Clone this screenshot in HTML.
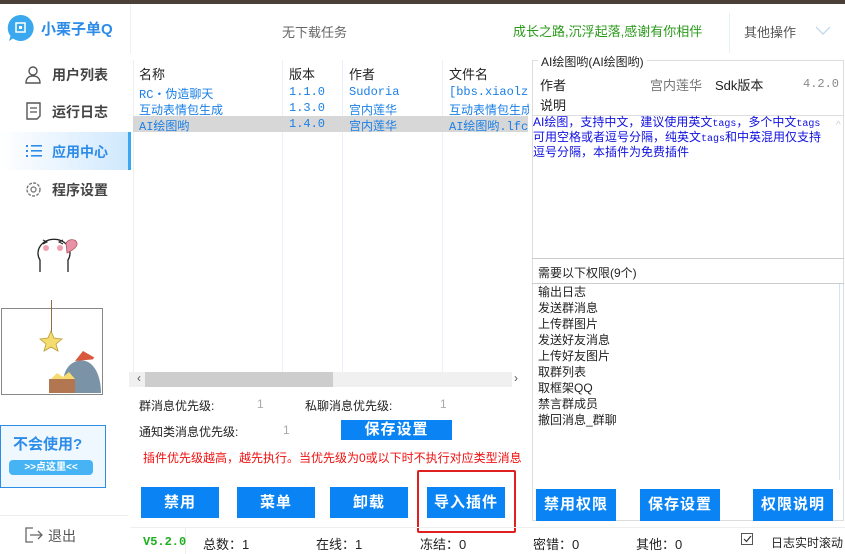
<!DOCTYPE html>
<html><head><meta charset="utf-8"><style>
*{margin:0;padding:0;box-sizing:border-box}
body{width:845px;height:554px;overflow:hidden;background:#fff;font-family:"Liberation Sans","Noto Sans CJK SC",sans-serif;font-size:13px;color:#222;position:relative}
.a{position:absolute;white-space:nowrap}
.m{font-family:"Liberation Mono","Noto Sans CJK SC",monospace;font-size:12px}
.l{font-family:"Liberation Mono",monospace;font-size:10px}
.btn{position:absolute;background:#0a84f5;color:#fff;font-weight:bold;font-size:15px;text-align:center;letter-spacing:1px}
.nav{position:absolute;left:22px;font-size:14px;color:#444;font-weight:bold}
</style></head><body>
<div class="a" style="left:0;top:0;width:845px;height:4px;background:#4a4038"></div>
<div class="a" style="left:130px;top:4px;width:1px;height:50px;background:#f0f0f0"></div>
<svg class="a" style="left:6px;top:13px" width="30" height="30" viewBox="0 0 30 30"><path d="M15 2a13 13 0 1 1-8 23.5L3 28l1.5-5A13 13 0 0 1 15 2z" fill="#3aa8ee"/><rect x="10" y="10" width="9" height="9" fill="none" stroke="#fff" stroke-width="1.5"/><rect x="13" y="13" width="3" height="3" fill="#fff"/></svg>
<div class="a" style="left:41px;top:18px;font-size:15px;font-weight:bold;color:#2d8ce8">小栗子单Q</div>
<div class="a" style="left:282px;top:22px;color:#666">无下载任务</div>
<div class="a" style="left:513px;top:21px;color:#2a9a1a;font-size:13px">成长之路,沉浮起落,感谢有你相伴</div>
<div class="a" style="left:729px;top:13px;width:1px;height:40px;background:#e6eef6"></div>
<div class="a" style="left:744px;top:22px;color:#555">其他操作</div>
<svg class="a" style="left:815px;top:26px" width="16" height="9"><path d="M1 1l7 7 7-7" fill="none" stroke="#b8d4ee" stroke-width="1.2"/></svg>
<svg class="a" style="left:25px;top:66px" width="16" height="18"><circle cx="8" cy="5" r="4" fill="none" stroke="#555" stroke-width="1.4"/><path d="M1 17c0-5 3-7 7-7s7 2 7 7z" fill="none" stroke="#555" stroke-width="1.4"/></svg>
<div class="nav" style="left:52px;top:65px">用户列表</div>
<svg class="a" style="left:26px;top:102px" width="15" height="18"><path d="M1 1h13v13l-3 3H1z" fill="none" stroke="#555" stroke-width="1.4"/><path d="M4 6h7M4 10h7" stroke="#555" stroke-width="1.2"/></svg>
<div class="nav" style="left:52px;top:102px">运行日志</div>
<div class="a" style="left:0;top:132px;width:131px;height:38px;background:linear-gradient(90deg,#fff,#cfe8fd)"></div>
<div class="a" style="left:128px;top:132px;width:3px;height:38px;background:#3aa8ee"></div>
<svg class="a" style="left:26px;top:145px" width="16" height="13"><g fill="#2d8ce8"><rect x="0" y="0" width="2" height="2"/><rect x="0" y="5" width="2" height="2"/><rect x="0" y="10" width="2" height="2"/><rect x="5" y="0" width="11" height="1.6"/><rect x="5" y="5" width="11" height="1.6"/><rect x="5" y="10" width="11" height="1.6"/></g></svg>
<div class="nav" style="left:52px;top:142px;color:#2d8ce8">应用中心</div>
<svg class="a" style="left:25px;top:181px" width="17" height="17"><circle cx="8.5" cy="8.5" r="6.5" fill="none" stroke="#777" stroke-width="1.4" stroke-dasharray="3 1.3"/><circle cx="8.5" cy="8.5" r="2.5" fill="none" stroke="#777" stroke-width="1.3"/></svg>
<div class="nav" style="left:52px;top:180px">程序设置</div>
<svg class="a" style="left:30px;top:222px" width="62" height="58"><path d="M10 50V38a16 14 0 1 1 28 0v12" fill="#fff" stroke="#222" stroke-width="1.3"/><circle cx="16" cy="26" r="3" fill="#f0a0b0"/><circle cx="30" cy="26" r="3" fill="#f0a0b0"/><path d="M13 18l4 2-4 2M33 18l-4 2 4 2" fill="none" stroke="#222"/><path d="M36 21c3-5 10-4 11 0 1 5-8 9-10 10z" fill="#e891a8" stroke="#a55" stroke-width=".8"/></svg>
<div class="a" style="left:1px;top:308px;width:102px;height:87px;border:1.5px solid #888"></div>
<div class="a" style="left:51px;top:300px;width:1px;height:33px;background:#8a7040"></div>
<svg class="a" style="left:38px;top:330px" width="26" height="22"><path d="M13 1l3 7 8 1-6 5 2 7-7-4-7 4 2-7-6-5 8-1z" fill="#f4dc70" stroke="#b99a30" stroke-width=".8"/></svg>
<svg class="a" style="left:45px;top:345px" width="58" height="50"><path d="M20 48c-4-10-2-28 12-32 16-4 24 14 24 32z" fill="#7b93a6"/><path d="M30 16l8-10 14 8z" fill="#d9583c"/><circle cx="51" cy="15" r="3" fill="#fff"/><rect x="4" y="34" width="26" height="14" fill="#b27650"/><path d="M6 34l6-6 6 4 6-5 6 7z" fill="#f4dc70"/></svg>
<div class="a" style="left:0;top:425px;width:106px;height:63px;border:1.5px solid #2d8ce8;background:#f0f8ff"></div>
<div class="a" style="left:13px;top:433px;font-size:15px;font-weight:bold;color:#2d8ce8">不会使用?</div>
<div class="a" style="left:9px;top:460px;width:84px;height:15px;background:#46b4f4;border-radius:4px;color:#fff;font-size:10px;font-weight:bold;text-align:center;line-height:15px">&gt;&gt;点这里&lt;&lt;</div>
<div class="a" style="left:0;top:515px;width:128px;height:1px;background:#eee"></div>
<svg class="a" style="left:25px;top:527px" width="18" height="16"><path d="M8 1H1v14h7" fill="none" stroke="#666" stroke-width="1.3"/><path d="M5 8h12M13 4l4 4-4 4" fill="none" stroke="#666" stroke-width="1.3"/></svg>
<div class="a" style="left:48px;top:526px;color:#555;font-size:14px">退出</div>
<div class="a" style="left:133px;top:60px;width:395px;height:312px;border-left:1px solid #eee"></div>
<div class="a" style="left:282px;top:60px;width:1px;height:312px;background:#e8f0f8"></div>
<div class="a" style="left:342px;top:60px;width:1px;height:312px;background:#e8f0f8"></div>
<div class="a" style="left:442px;top:60px;width:1px;height:312px;background:#e8f0f8"></div>
<div class="a" style="left:139px;top:64px">名称</div>
<div class="a" style="left:289px;top:64px">版本</div>
<div class="a" style="left:349px;top:64px">作者</div>
<div class="a" style="left:449px;top:64px">文件名</div>
<div class="a" style="left:133px;top:116px;width:395px;height:16px;background:#d7d7d7"></div>
<div class="a m" style="left:139px;top:85px;color:#1a7fe6">RC・伪造聊天</div>
<div class="a m" style="left:289px;top:85px;color:#1a7fe6">1.1.0</div>
<div class="a m" style="left:349px;top:85px;color:#1a7fe6">Sudoria</div>
<div class="a m" style="left:449px;top:85px;color:#1a7fe6;width:80px;overflow:hidden">[bbs.xiaolz.cn</div>
<div class="a m" style="left:139px;top:101px;color:#1a7fe6">互动表情包生成</div>
<div class="a m" style="left:289px;top:101px;color:#1a7fe6">1.3.0</div>
<div class="a m" style="left:349px;top:101px;color:#1a7fe6">宫内莲华</div>
<div class="a m" style="left:449px;top:101px;color:#1a7fe6;width:80px;overflow:hidden">互动表情包生成</div>
<div class="a m" style="left:139px;top:117px;color:#1a7fe6">AI绘图哟</div>
<div class="a m" style="left:289px;top:117px;color:#1a7fe6">1.4.0</div>
<div class="a m" style="left:349px;top:117px;color:#1a7fe6">宫内莲华</div>
<div class="a m" style="left:449px;top:117px;color:#1a7fe6;width:80px;overflow:hidden">AI绘图哟.lfcd</div>
<div class="a" style="left:129px;top:372px;width:383px;height:15px;background:#f0f0f0"></div>
<div class="a" style="left:145px;top:372px;width:188px;height:15px;background:#cdcdcd"></div>
<div class="a" style="left:137px;top:371px;color:#555;font-size:12px">‹</div>
<div class="a" style="left:514px;top:371px;color:#555;font-size:12px">›</div>
<div class="a" style="left:139px;top:397px;font-size:12px">群消息优先级:</div>
<div class="a" style="left:257px;top:397px;font-size:12px;color:#aaa">1</div>
<div class="a" style="left:305px;top:397px;font-size:12px">私聊消息优先级:</div>
<div class="a" style="left:440px;top:397px;font-size:12px;color:#aaa">1</div>
<div class="a" style="left:139px;top:423px;font-size:12px">通知类消息优先级:</div>
<div class="a" style="left:283px;top:423px;font-size:12px;color:#aaa">1</div>
<div class="btn" style="left:341px;top:420px;width:111px;height:20px;line-height:20px">保存设置</div>
<div class="a" style="left:143px;top:449px;color:#f01010;font-size:12px">插件优先级越高，越先执行。当优先级为0或以下时不执行对应类型消息</div>
<div class="btn" style="left:141px;top:487px;width:78px;height:31px;line-height:31px">禁用</div>
<div class="btn" style="left:237px;top:487px;width:78px;height:31px;line-height:31px">菜单</div>
<div class="btn" style="left:330px;top:487px;width:78px;height:31px;line-height:31px">卸载</div>
<div class="btn" style="left:427px;top:487px;width:78px;height:31px;line-height:31px">导入插件</div>
<div class="a" style="left:417px;top:470px;width:99px;height:63px;border:2px solid #e02020;border-radius:2px"></div>
<div class="a" style="left:532px;top:60px;width:312px;height:461px;border:1px solid #ddd"></div>
<div class="a" style="left:538px;top:53px;background:#fff;padding:0 3px;font-size:12px">AI绘图哟(AI绘图哟)</div>
<div class="a" style="left:540px;top:75px">作者</div>
<div class="a" style="left:650px;top:75px;color:#777">宫内莲华</div>
<div class="a" style="left:715px;top:75px">Sdk版本</div>
<div class="a m" style="left:803px;top:77px;color:#888">4.2.0</div>
<div class="a" style="left:540px;top:95px">说明</div>
<div class="a" style="left:532px;top:115px;width:312px;height:144px;border-top:1px solid #ddd;border-bottom:1px solid #ccc"></div>
<div class="a" style="left:533px;top:116px;color:#1010e0;font-size:12px;line-height:12px">AI绘图，支持中文，建议使用英文<span class="l">tags</span>，多个中文<span class="l">tags</span><br>可用空格或者逗号分隔，纯英文<span class="l">tags</span>和中英混用仅支持<br>逗号分隔，本插件为免费插件</div>
<div class="a" style="left:836px;top:120px;color:#ccc;font-size:10px">^</div>
<div class="a" style="left:538px;top:264px;font-size:12px">需要以下权限(9个)</div>
<div class="a" style="left:532px;top:283px;width:312px;height:1px;background:#ccc"></div>
<div class="a" style="left:839px;top:284px;width:1px;height:196px;background:#cde6fb"></div>
<div class="a" style="left:538px;top:284px;font-size:12px;line-height:16px">输出日志<br>发送群消息<br>上传群图片<br>发送好友消息<br>上传好友图片<br>取群列表<br>取框架QQ<br>禁言群成员<br>撤回消息_群聊</div>
<div class="btn" style="left:536px;top:489px;width:80px;height:32px;line-height:32px">禁用权限</div>
<div class="btn" style="left:640px;top:489px;width:80px;height:32px;line-height:32px">保存设置</div>
<div class="btn" style="left:753px;top:489px;width:80px;height:32px;line-height:32px">权限说明</div>
<div class="a" style="left:131px;top:527px;width:714px;height:1px;background:#eee"></div>
<div class="a" style="left:185px;top:528px;width:1px;height:26px;background:#eee"></div>
<div class="a m" style="left:143px;top:535px;color:#1cb01c;font-weight:bold">V5.2.0</div>
<div class="a" style="left:203px;top:534px">总数：1</div>
<div class="a" style="left:316px;top:534px">在线：1</div>
<div class="a" style="left:420px;top:534px">冻结：0</div>
<div class="a" style="left:533px;top:534px">密错：0</div>
<div class="a" style="left:636px;top:534px">其他：0</div>
<div class="a" style="left:741px;top:533px;width:12px;height:12px;border:1px solid #555"></div>
<svg class="a" style="left:743px;top:535px" width="9" height="8"><path d="M1 4l2.5 2.5L8 1" fill="none" stroke="#333" stroke-width="1.2"/></svg>
<div class="a" style="left:771px;top:534px;font-size:12px">日志实时滚动</div>
</body></html>
